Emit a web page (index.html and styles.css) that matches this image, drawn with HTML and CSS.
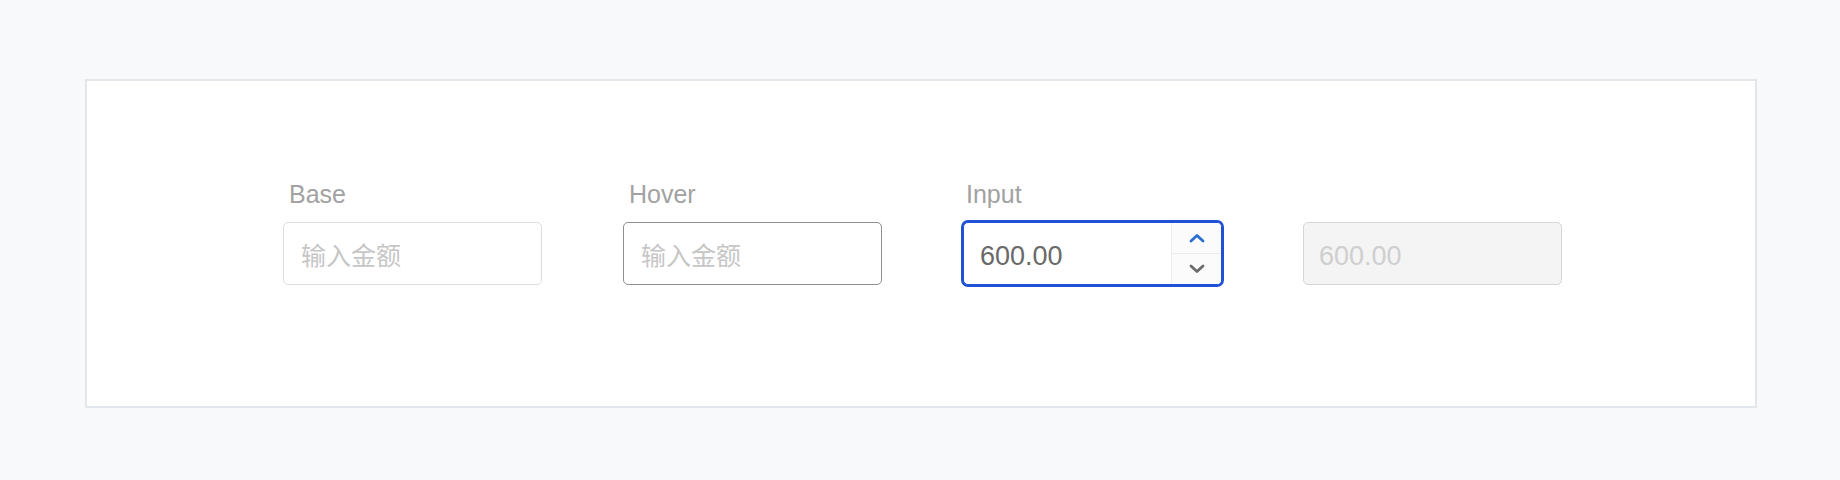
FILE: index.html
```html
<!DOCTYPE html>
<html lang="zh">
<head>
<meta charset="utf-8">
<title>Input states</title>
<link rel="stylesheet" href="styles.css">
</head>
<body>
<div class="page">
  <section class="card">
    <div class="row">
      <div class="field">
        <div class="label">Base</div>
        <div class="box">
          <input class="control" type="text" placeholder="输入金额">
        </div>
      </div>
      <div class="field">
        <div class="label">Hover</div>
        <div class="box box--hover">
          <input class="control" type="text" placeholder="输入金额">
        </div>
      </div>
      <div class="field">
        <div class="label label--focus">Input</div>
        <div class="box box--focus">
          <input class="control" type="text" value="600.00">
          <div class="stepper">
            <div class="step step--up">
              <svg width="16" height="10" viewBox="0 0 16 10"><path d="M2 8 L8 2.5 L14 8" fill="none" stroke="#2a6fcf" stroke-width="2.8" stroke-linecap="round" stroke-linejoin="round"/></svg>
            </div>
            <div class="step step--down">
              <svg width="16" height="10" viewBox="0 0 16 10"><path d="M2 2 L8 7.5 L14 2" fill="none" stroke="#6b6b6b" stroke-width="2.8" stroke-linecap="round" stroke-linejoin="round"/></svg>
            </div>
          </div>
        </div>
      </div>
      <div class="field">
        <div class="label label--empty"></div>
        <div class="box box--disabled">
          <input class="control" type="text" value="600.00" disabled>
        </div>
      </div>
    </div>
  </section>
</div>
</body>
</html>
```

FILE: styles.css
```css
html, body {
  margin: 0;
  padding: 0;
  background: #f8f9fb;
}

.page {
  padding: 79px 83px 0 85px;
  font-family: "Liberation Sans", Arial, "Noto Sans CJK SC", sans-serif;
}

.card {
  box-sizing: border-box;
  width: 1672px;
  height: 329px;
  background: #ffffff;
  border: 2px solid #e3e6ea;
}

.row {
  display: flex;
  gap: 81px;
  padding: 99px 0 0 196px;
}

.field {
  display: flex;
  flex-direction: column;
  width: 259px;
}

.label {
  height: 29px;
  line-height: 29px;
  font-size: 25px;
  color: #a2a2a2;
  padding-left: 6px;
  margin-bottom: 13px;
}

.label--focus {
  padding-left: 3px;
}

.box {
  box-sizing: border-box;
  display: flex;
  align-items: stretch;
  height: 63px;
  border: 1px solid #dedede;
  border-radius: 5px;
  background: #ffffff;
  overflow: hidden;
}

.box--hover {
  border-color: #8f8f8f;
}

.box--focus {
  border-color: #2050d6;
  box-shadow: 0 0 0 2px #2050d6;
}

.box--disabled {
  background: #f4f4f4;
  border-color: #d6d6d6;
}

.control {
  flex: 1;
  min-width: 0;
  border: 0;
  outline: 0;
  margin: 0;
  padding: 5px 0 0 17px;
  background: transparent;
  font-family: "Liberation Sans", Arial, "Noto Sans CJK SC", sans-serif;
  font-size: 27px;
  color: #6a6a6a;
}

.control::placeholder {
  color: #c6c6c6;
  font-family: "Noto Sans CJK SC", sans-serif;
  font-size: 25px;
}

.box--focus .control {
  padding-left: 16px;
}

.control:disabled {
  color: #cfcfcf;
  -webkit-text-fill-color: #cfcfcf;
  padding-left: 15px;
}

.stepper {
  width: 49px;
  display: flex;
  flex-direction: column;
  border-left: 1px solid #ececec;
  background: #fbfbfb;
}

.step {
  flex: 1;
  display: flex;
  align-items: center;
  justify-content: center;
}

.step--up {
  border-bottom: 1px solid #ececec;
}
```
